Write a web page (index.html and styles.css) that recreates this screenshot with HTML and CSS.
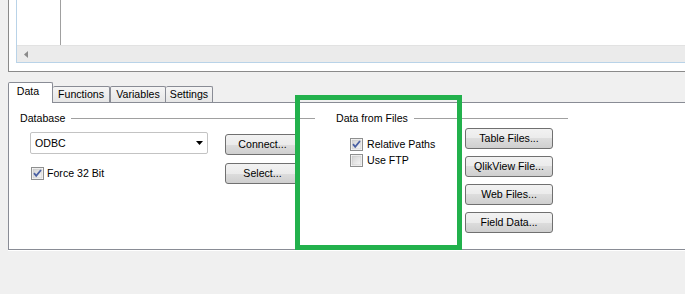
FILE: index.html
```html
<!DOCTYPE html>
<html>
<head>
<meta charset="utf-8">
<link rel="stylesheet" href="styles.css">
</head>
<body>
<div class="viewer">
  <div class="grid">
    <div class="grid-body"><div class="grid-col"></div></div>
    <div class="hscroll">
      <svg class="arrow-left" width="4" height="7" viewBox="0 0 4 7"><path d="M4 0 L0 3.5 L4 7 Z" fill="#8a8a8a"/></svg>
    </div>
  </div>
</div>

<div class="tabs">
  <div class="tab active tab-data">Data</div>
  <div class="tab tab-func">Functions</div>
  <div class="tab tab-var">Variables</div>
  <div class="tab tab-set">Settings</div>
</div>

<div class="panel">
  <div class="group group-db">
    <div class="group-head"><span class="group-label">Database</span><span class="group-line"></span></div>
    <div class="group-body db-body">
      <div class="db-left">
        <div class="combo"><span class="combo-text">ODBC</span>
          <svg class="combo-arrow" width="7" height="4" viewBox="0 0 7 4"><path d="M0 0 H7 L3.5 4 Z" fill="#000"/></svg>
        </div>
        <label class="check check-force">
          <svg class="cb" width="13" height="13" viewBox="0 0 13 13">
            <defs><linearGradient id="g1" x1="0" y1="0" x2="1" y2="1"><stop offset="0" stop-color="#d2d2d2"/><stop offset="1" stop-color="#f7f7f7"/></linearGradient></defs>
            <rect x="0.5" y="0.5" width="12" height="12" fill="#fff" stroke="#8e8f8f"/>
            <rect x="2" y="2" width="9" height="9" fill="url(#g1)" stroke="#c4c4c4" stroke-width="0.6"/>
            <path d="M3 6.2 L5.2 8.8 L10 3" fill="none" stroke="#4b61a3" stroke-width="1.8"/>
          </svg>
          <span>Force 32 Bit</span>
        </label>
      </div>
      <div class="btn-col db-btns">
        <div class="btn btn-db">Connect...</div>
        <div class="btn btn-db">Select...</div>
      </div>
    </div>
  </div>

  <div class="group group-files">
    <div class="group-head"><span class="group-label">Data from Files</span><span class="group-line"></span></div>
    <div class="group-body files-body">
      <div class="files-checks">
        <label class="check">
          <svg class="cb" width="13" height="13" viewBox="0 0 13 13">
            <defs><linearGradient id="g2" x1="0" y1="0" x2="1" y2="1"><stop offset="0" stop-color="#d2d2d2"/><stop offset="1" stop-color="#f7f7f7"/></linearGradient></defs>
            <rect x="0.5" y="0.5" width="12" height="12" fill="#fff" stroke="#8e8f8f"/>
            <rect x="2" y="2" width="9" height="9" fill="url(#g2)" stroke="#c4c4c4" stroke-width="0.6"/>
            <path d="M3 6.2 L5.2 8.8 L10 3" fill="none" stroke="#4b61a3" stroke-width="1.8"/>
          </svg>
          <span>Relative Paths</span>
        </label>
        <label class="check">
          <svg class="cb" width="13" height="13" viewBox="0 0 13 13">
            <defs><linearGradient id="g3" x1="0" y1="0" x2="1" y2="1"><stop offset="0" stop-color="#d2d2d2"/><stop offset="1" stop-color="#f7f7f7"/></linearGradient></defs>
            <rect x="0.5" y="0.5" width="12" height="12" fill="#fff" stroke="#8e8f8f"/>
            <rect x="2" y="2" width="9" height="9" fill="url(#g3)" stroke="#c4c4c4" stroke-width="0.6"/>
          </svg>
          <span>Use FTP</span>
        </label>
      </div>
      <div class="btn-col files-btns">
        <div class="btn btn-file">Table Files...</div>
        <div class="btn btn-file">QlikView File...</div>
        <div class="btn btn-file">Web Files...</div>
        <div class="btn btn-file">Field Data...</div>
      </div>
    </div>
  </div>
</div>

<div class="highlight"></div>
</body>
</html>
```

FILE: styles.css
```css
html, body {
  margin: 0;
  padding: 0;
}
body {
  background: #f0f0f0;
  font-family: "Liberation Sans", Arial, sans-serif;
  font-size: 10.6px;
  color: #000;
  overflow: hidden;
  width: 685px;
  height: 294px;
  position: relative;
}

/* top viewer */
.viewer {
  margin-left: 8px;
  width: 700px;
  height: 72px;
  box-sizing: border-box;
  background: #fff;
  border-left: 1px solid #8a8a8a;
  border-bottom: 1px solid #8a8a8a;
  padding-left: 7px;
}
.grid {
  height: 63px;
  box-sizing: border-box;
  border-left: 1px solid #b9d3e8;
  border-bottom: 1px solid #b9d3e8;
  display: flex;
  flex-direction: column;
}
.grid-body {
  height: 45px;
  background: #fff;
}
.grid-col {
  width: 43px;
  height: 45px;
  border-right: 1px solid #a0a0a0;
}
.hscroll {
  height: 17px;
  box-sizing: border-box;
  background: #ebebeb;
  border-top: 1px solid #e2e2e2;
  display: flex;
  align-items: center;
  padding-left: 7px;
}
.arrow-left {
  display: block;
}

/* tabs */
.tabs {
  margin-top: 10px;
  margin-left: 8px;
  height: 20px;
  display: flex;
  align-items: flex-end;
}
.tab {
  box-sizing: border-box;
  height: 16px;
  border: 1px solid #898c95;
  border-bottom: none;
  border-radius: 2px 2px 0 0;
  background: linear-gradient(#f5f5f5, #e6e6e6);
  text-align: center;
  line-height: 14px;
}
.tab.active {
  position: relative;
  z-index: 1;
  height: 21px;
  margin-bottom: -1px;
  background: #fff;
  line-height: 16px;
  padding-right: 5px;
}
.tab-data { width: 45px; }
.tab-func { width: 57px; border-left: none; }
.tab-var { width: 56px; }
.tab-set { width: 47px; border-left: none; }

/* panel */
.panel {
  margin-left: 8px;
  width: 700px;
  height: 148px;
  box-sizing: border-box;
  background: #fff;
  border: 1px solid #898c95;
  border-right: none;
  box-shadow: 0 1px 0 #ffffff;
  display: flex;
  align-items: flex-start;
  padding-top: 9px;
}
.group-head {
  display: flex;
  align-items: center;
  height: 13px;
  line-height: 13px;
}
.group-line {
  flex: 1;
  height: 1px;
  background: #a0a0a0;
  margin-left: 6px;
}
.group-db {
  margin-left: 11px;
  width: 295px;
}
.group-files {
  margin-left: 21px;
  width: 232px;
}
.group-body {
  display: flex;
  align-items: flex-start;
}
.db-body {
  margin-top: 7px;
  margin-left: 10px;
}
.db-left {
  display: flex;
  flex-direction: column;
}
.combo {
  width: 178px;
  height: 22px;
  box-sizing: border-box;
  border: 1px solid #c3c3c3;
  border-radius: 2px;
  background: #fff;
  display: flex;
  align-items: center;
  padding-left: 4px;
  padding-right: 4px;
}
.combo-text {
  flex: 1;
}
.combo-arrow {
  display: block;
}
.check {
  display: flex;
  align-items: center;
  height: 16px;
}
.cb {
  display: block;
  margin-right: 4px;
  flex: none;
}
.check-force {
  margin-top: 11px;
  margin-left: 1px;
}
.check-force .cb {
  margin-right: 3px;
}
.btn-col {
  display: flex;
  flex-direction: column;
}
.db-btns {
  margin-left: 17px;
  margin-top: 2px;
  gap: 8px;
}
.btn {
  box-sizing: border-box;
  height: 21px;
  border: 1px solid #707070;
  border-radius: 3px;
  background: linear-gradient(#f2f2f2 0%, #ebebeb 50%, #dddddd 50%, #cfcfcf 100%);
  text-align: center;
  line-height: 19px;
}
.btn-db { width: 75px; }
.btn-file { width: 88px; }
.files-body {
  margin-top: 3px;
}
.files-checks {
  margin-left: 14px;
  margin-top: 8px;
  width: 115px;
  display: flex;
  flex-direction: column;
}
.files-btns {
  gap: 7px;
}

/* annotation highlight */
.highlight {
  position: absolute;
  left: 295px;
  top: 95px;
  width: 167px;
  height: 155px;
  box-sizing: border-box;
  border: 5px solid #22b14c;
}
```
